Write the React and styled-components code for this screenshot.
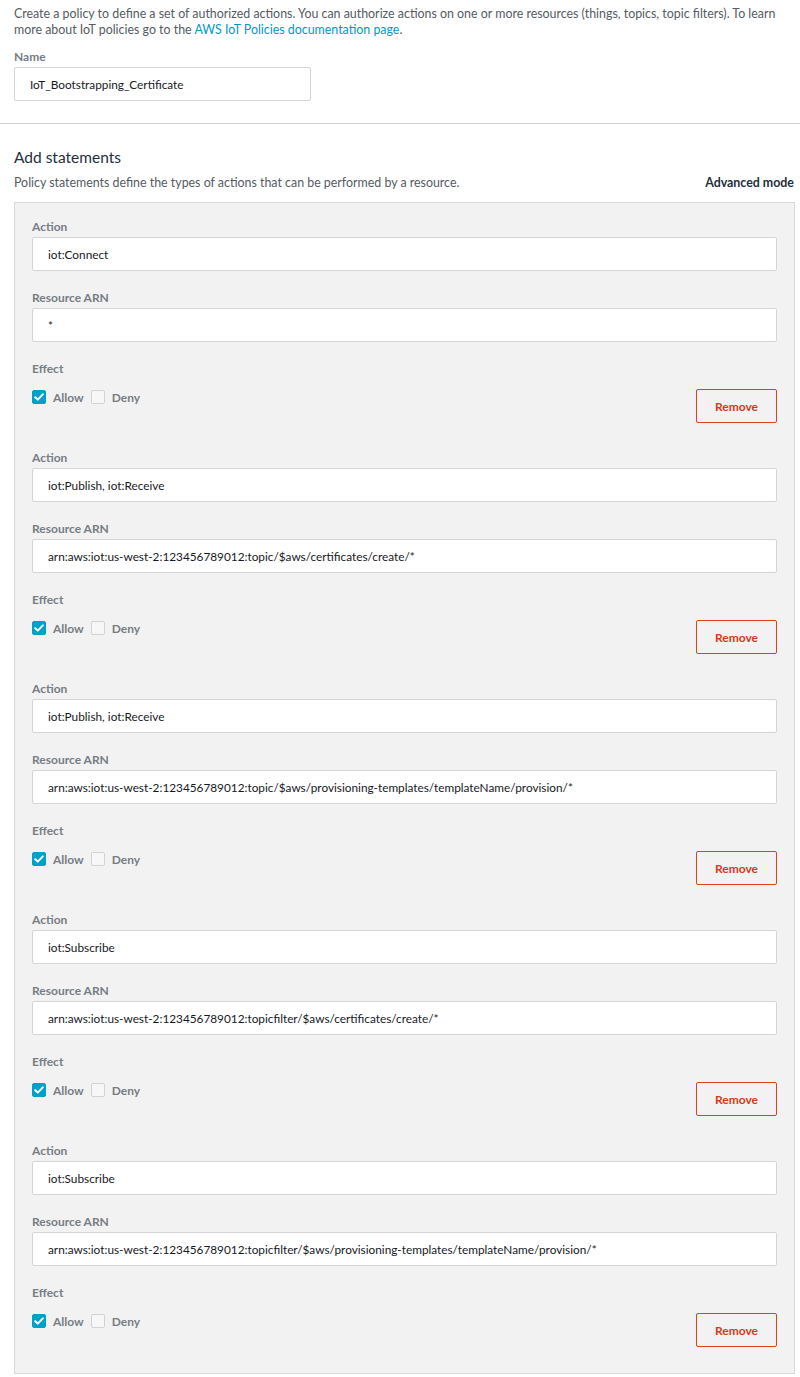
import React from "react";
import styled, { createGlobalStyle } from "styled-components";

const Global = createGlobalStyle`
  html, body { margin: 0; padding: 0; background: #ffffff; }
  body { font-family: Lato, "Open Sans", Arial, sans-serif; color: #16191f; }
  * { box-sizing: border-box; }
`;

const Page = styled.div`
  width: 800px;
  padding: 6px 0 4px 0;
`;

const Section = styled.section`
  padding: 0 5px 0 14px;
`;

const Intro = styled.p`
  margin: 0;
  font-size: 12.4px;
  line-height: 16px;
  color: #545b64;
`;

const Link = styled.a`
  color: #0099c7;
  text-decoration: none;
`;

const Label = styled.div`
  font-size: 12px;
  line-height: 14px;
  font-weight: 700;
  color: #777d84;
  margin-top: ${(p) => p.$top || 0}px;
  margin-bottom: 3px;
`;

const Input = styled.div`
  height: 34px;
  width: ${(p) => p.$width || "100%"};
  background: #ffffff;
  border: 1px solid #d3d5d6;
  border-radius: 2px;
  display: flex;
  align-items: center;
  padding: 0 15px;
  font-size: 11.8px;
  color: #16191f;
`;

const Divider = styled.hr`
  border: 0;
  border-top: 1px solid #cfd1d3;
  margin: 22px 0 0 0;
`;

const Heading = styled.h2`
  margin: 23px 0 0 0;
  font-size: 15.5px;
  line-height: 20px;
  font-weight: 400;
  color: #232f3e;
`;

const DescRow = styled.div`
  display: flex;
  justify-content: space-between;
  align-items: center;
  margin-top: 7px;
  height: 16px;
`;

const Desc = styled.span`
  font-size: 12.4px;
  color: #545b64;
`;

const Advanced = styled.span`
  font-size: 12.4px;
  font-weight: 700;
  color: #232f3e;
  margin-right: 1px;
`;

const Panel = styled.div`
  margin-top: 12px;
  background: #f2f2f2;
  border: 1px solid #d8d8d8;
  padding: 17px 17px 26px 17px;
  display: flex;
  flex-direction: column;
  gap: 28px;
`;

const Statement = styled.div`
  display: flex;
  flex-direction: column;
`;

const EffectRow = styled.div`
  display: flex;
  justify-content: space-between;
  align-items: flex-start;
  margin-top: 11px;
`;

const Checks = styled.div`
  display: flex;
  align-items: center;
  height: 16px;
  margin-top: -1px;
`;

const Box = styled.span`
  width: 14px;
  height: 14px;
  border-radius: 2px;
  display: inline-flex;
  align-items: center;
  justify-content: center;
  background: ${(p) => (p.$checked ? "#00a1c9" : "#f7f7f7")};
  border: 1px solid ${(p) => (p.$checked ? "#00a1c9" : "#d0d2d3")};
  margin-right: 7px;
`;

const CheckText = styled.span`
  font-size: 12px;
  font-weight: 700;
  color: #777d84;
  margin-right: 7px;
`;

const RemoveButton = styled.button`
  width: 81px;
  height: 34px;
  margin-top: -1px;
  background: #f2f2f2;
  border: 1px solid #e0401a;
  border-radius: 2px;
  color: #d9391a;
  font-family: inherit;
  font-size: 12px;
  font-weight: 700;
  padding: 0;
`;

const Check = () => (
  <svg width="10" height="8" viewBox="0 0 10 8">
    <path d="M1.2 4.2 L3.8 6.6 L8.8 1.4" fill="none" stroke="#fff" strokeWidth="2" strokeLinecap="round" strokeLinejoin="round" />
  </svg>
);

const statements = [
  { action: "iot:Connect", arn: "*" },
  { action: "iot:Publish, iot:Receive", arn: "arn:aws:iot:us-west-2:123456789012:topic/$aws/certificates/create/*" },
  { action: "iot:Publish, iot:Receive", arn: "arn:aws:iot:us-west-2:123456789012:topic/$aws/provisioning-templates/templateName/provision/*" },
  { action: "iot:Subscribe", arn: "arn:aws:iot:us-west-2:123456789012:topicfilter/$aws/certificates/create/*" },
  { action: "iot:Subscribe", arn: "arn:aws:iot:us-west-2:123456789012:topicfilter/$aws/provisioning-templates/templateName/provision/*" },
];

export default function App() {
  return (
    <Page>
      <Global />
      <Section>
        <Intro>
          Create a policy to define a set of authorized actions. You can authorize actions on one or more resources (things, topics, topic filters). To learn more about IoT policies go to the{" "}
          <Link href="#">AWS IoT Policies documentation page</Link>.
        </Intro>
        <Label $top={12}>Name</Label>
        <Input $width="297px">IoT_Bootstrapping_Certificate</Input>
      </Section>
      <Divider />
      <Section>
        <Heading>Add statements</Heading>
        <DescRow>
          <Desc>Policy statements define the types of actions that can be performed by a resource.</Desc>
          <Advanced>Advanced mode</Advanced>
        </DescRow>
        <Panel>
          {statements.map((s, i) => (
            <Statement key={i}>
              <Label>Action</Label>
              <Input>{s.action}</Input>
              <Label $top={20}>Resource ARN</Label>
              <Input>{s.arn}</Input>
              <Label $top={20}>Effect</Label>
              <EffectRow>
                <Checks>
                  <Box $checked><Check /></Box>
                  <CheckText>Allow</CheckText>
                  <Box />
                  <CheckText>Deny</CheckText>
                </Checks>
                <RemoveButton>Remove</RemoveButton>
              </EffectRow>
            </Statement>
          ))}
        </Panel>
      </Section>
    </Page>
  );
}
